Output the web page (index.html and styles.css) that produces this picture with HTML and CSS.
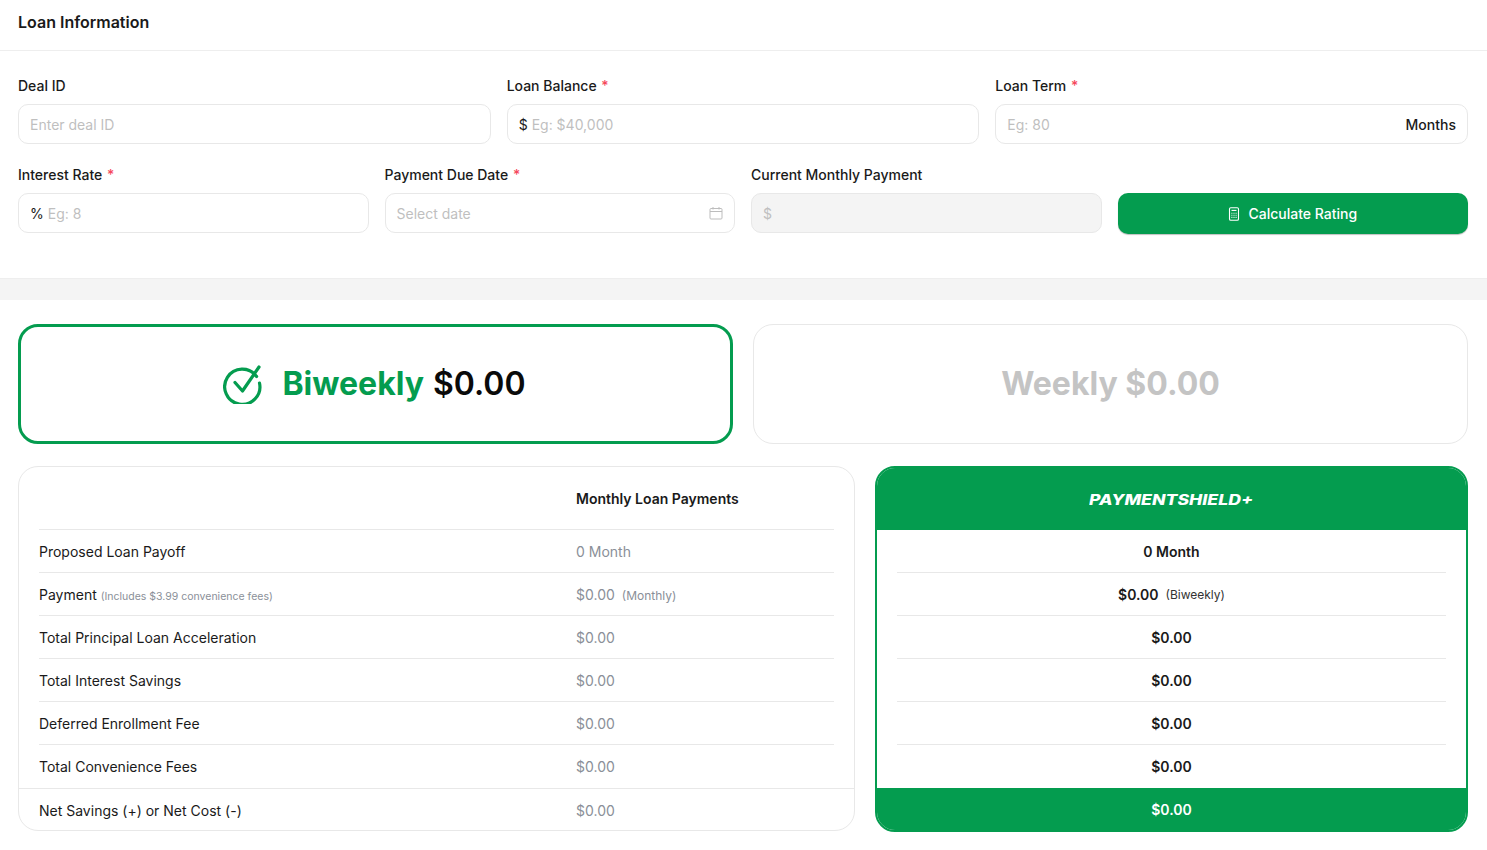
FILE: index.html
```html
<!DOCTYPE html>
<html lang="en">
<head>
<meta charset="utf-8">
<title>Loan Information</title>
<link rel="stylesheet" href="styles.css">
</head>
<body>
<section class="loan">
  <header class="loan-head">Loan Information</header>
  <div class="form">
    <div class="row row-3">
      <div class="field">
        <label class="label">Deal ID</label>
        <div class="input"><span class="ph">Enter deal ID</span></div>
      </div>
      <div class="field">
        <label class="label">Loan Balance <span class="req">*</span></label>
        <div class="input"><span class="prefix">$</span><span class="ph">Eg: $40,000</span></div>
      </div>
      <div class="field">
        <label class="label">Loan Term <span class="req">*</span></label>
        <div class="input input-split"><span class="ph">Eg: 80</span><span class="suffix">Months</span></div>
      </div>
    </div>
    <div class="row row-4">
      <div class="field">
        <label class="label">Interest Rate <span class="req">*</span></label>
        <div class="input"><span class="prefix">%</span><span class="ph">Eg: 8</span></div>
      </div>
      <div class="field">
        <label class="label">Payment Due Date <span class="req">*</span></label>
        <div class="input input-split"><span class="ph">Select date</span>
          <svg class="cal" viewBox="0 0 14 14" fill="none" stroke="#bdbdbd" stroke-width="1"><rect x="1" y="2.5" width="12" height="10.5" rx="1"/><path d="M1 5.5h12M4 1v2.5M10 1v2.5"/></svg>
        </div>
      </div>
      <div class="field">
        <label class="label">Current Monthly Payment</label>
        <div class="input input-off"><span class="ph">$</span></div>
      </div>
      <div class="field field-btn">
        <button class="btn" type="button">
          <svg class="calc" viewBox="0 0 12 14" fill="none" stroke="#fff" stroke-width="1.1"><rect x="1.5" y="0.8" width="9" height="12.4" rx="1.3"/><path d="M3.5 3.4h5"/><path d="M3.4 6.3h1M5.5 6.3h1M7.6 6.3h1M3.4 8.3h1M5.5 8.3h1M7.6 8.3h1M3.4 10.4h1M5.5 10.4h1M7.6 10.4h1"/></svg>
          Calculate Rating
        </button>
      </div>
    </div>
  </div>
</section>
<div class="band"></div>
<main class="results">
  <div class="plans">
    <div class="plan plan-on">
      <svg class="check" viewBox="0 0 40 40" fill="none" stroke="#049c4f" stroke-width="3.2" stroke-linecap="round" stroke-linejoin="round"><path d="M33.6 12.5A17.6 17.6 0 1 0 36.5 19"/><path d="M12 18.5l7.5 8.5L36 3"/></svg>
      <span class="plan-name">Biweekly</span> <span class="plan-amt">$0.00</span>
    </div>
    <div class="plan plan-off">Weekly $0.00</div>
  </div>
  <div class="tables">
    <div class="tbl">
      <div class="tbl-head"><span></span><span class="tbl-title">Monthly Loan Payments</span></div>
      <div class="tbl-body">
        <div class="tr"><span>Proposed Loan Payoff</span><span class="val">0 Month</span></div>
        <div class="tr"><span>Payment <small class="note">(Includes $3.99 convenience fees)</small></span><span class="val">$0.00 <small class="per">(Monthly)</small></span></div>
        <div class="tr"><span>Total Principal Loan Acceleration</span><span class="val">$0.00</span></div>
        <div class="tr"><span>Total Interest Savings</span><span class="val">$0.00</span></div>
        <div class="tr"><span>Deferred Enrollment Fee</span><span class="val">$0.00</span></div>
        <div class="tr"><span>Total Convenience Fees</span><span class="val">$0.00</span></div>
      </div>
      <div class="tr tr-foot"><span>Net Savings (+) or Net Cost (-)</span><span class="val">$0.00</span></div>
    </div>
    <div class="shield">
      <div class="shield-head"><span class="logo">PAYMENTSHIELD+</span></div>
      <div class="shield-body">
        <div class="sr">0 Month</div>
        <div class="sr">$0.00 <small class="per-dark">(Biweekly)</small></div>
        <div class="sr">$0.00</div>
        <div class="sr">$0.00</div>
        <div class="sr">$0.00</div>
        <div class="sr">$0.00</div>
      </div>
      <div class="shield-foot">$0.00</div>
    </div>
  </div>
</main>
</body>
</html>
```
FILE: styles.css
```css
* { box-sizing: border-box; }
html, body { margin: 0; padding: 0; }
body {
  width: 1487px;
  height: 850px;
  overflow: hidden;
  background: #fff;
  color: #1a1a1a;
  font-family: Inter, "Liberation Sans", sans-serif;
  font-size: 14px;
}
.loan-head {
  height: 51px;
  padding: 13px 18px 0;
  border-bottom: 1px solid #eeeeee;
  font-size: 16px;
  font-weight: 600;
  line-height: 19px;
}
.form {
  height: 227px;
  padding: 25px 19px 0 18px;
  display: flex;
  flex-direction: column;
  gap: 21px;
}
.row { display: grid; gap: 16px; }
.row-3 { grid-template-columns: repeat(3, 1fr); }
.row-4 { grid-template-columns: repeat(4, 1fr); }
.field { display: flex; flex-direction: column; gap: 9px; min-width: 0; }
.field-btn { justify-content: flex-end; }
.label {
  font-size: 14px;
  font-weight: 500;
  line-height: 19px;
  color: #1a1a1a;
}
.req { color: #f5475b; margin-left: 1px; }
.input {
  height: 40px;
  padding: 0 11px;
  display: flex;
  align-items: center;
  gap: 4px;
  border: 1px solid #e8e8e8;
  border-radius: 10px;
  background: #fff;
}
.input-split { justify-content: space-between; }
.input-off { background: #f4f4f4; }
.ph { color: #bfbfbf; }
.prefix { color: #1a1a1a; }
.suffix { font-weight: 500; color: #1a1a1a; }
.cal { width: 14px; height: 14px; }
.btn {
  height: 41px;
  margin-bottom: -1px;
  display: flex;
  align-items: center;
  justify-content: center;
  gap: 8px;
  border: 0;
  border-radius: 10px;
  background: #049c4f;
  box-shadow: 0 1px 1px rgba(0, 0, 0, .25);
  color: #fff;
  font: 500 14px Inter, sans-serif;
}
.calc { width: 12px; height: 14px; }
.band {
  height: 22px;
  background: #f4f4f4;
  border-top: 1px solid #eeeeee;
}
.results { padding: 24px 19px 0 18px; }
.plans {
  display: grid;
  grid-template-columns: 1fr 1fr;
  gap: 20px;
}
.plan {
  height: 120px;
  display: flex;
  align-items: center;
  justify-content: center;
  border-radius: 20px;
  font-size: 32px;
  font-weight: 700;
  line-height: 38px;
}
.plan-on { border: 3px solid #049c4f; gap: 9px; padding-right: 2px; }
.plan-off { border: 1px solid #e8e8e8; color: #c4c4c4; }
.check { width: 40px; height: 40px; margin-right: 10px; }
.plan-name { color: #049c4f; }
.plan-amt { color: #0a0a0a; font-weight: 600; }
.tables {
  margin-top: 22px;
  display: grid;
  grid-template-columns: 837px 593px;
  gap: 20px;
  align-items: start;
}
.tbl {
  height: 365px;
  border: 1px solid #e8e8e8;
  border-radius: 20px;
  overflow: hidden;
}
.tbl-head, .tr {
  display: grid;
  grid-template-columns: 537px 1fr;
  align-items: center;
}
.tbl-head {
  height: 63px;
  margin: 0 20px;
  border-bottom: 1px solid #e8e8e8;
}
.tbl-title { font-weight: 600; }
.tbl-body { padding: 0 20px; }
.tr { height: 43px; border-bottom: 1px solid #e8e8e8; }
.tbl-body .tr:last-child { border-bottom: 0; }
.tr-foot { height: 43px; padding: 0 20px; border-top: 1px solid #e8e8e8; border-bottom: 0; }
.val { color: #8a8f98; }
.note { font-size: 10.5px; color: #8a8f98; }
.per { font-size: 12px; margin-left: 3px; }
.shield {
  height: 366px;
  border: 2px solid #049c4f;
  border-radius: 20px;
  overflow: hidden;
  display: flex;
  flex-direction: column;
}
.shield-head {
  height: 62px;
  flex: none;
  display: flex;
  align-items: center;
  justify-content: center;
  background: #049c4f;
}
.logo {
  display: inline-block;
  color: #fff;
  font-size: 14px;
  font-weight: 800;
  font-style: italic;
  transform: scaleX(1.26);
}
.shield-body { flex: 1; padding: 0 20px; }
.sr {
  height: 43px;
  display: flex;
  align-items: center;
  justify-content: center;
  gap: 7px;
  border-bottom: 1px solid #e8e8e8;
  font-weight: 600;
}
.sr:last-child { border-bottom: 0; }
.per-dark { font-size: 12px; font-weight: 400; color: #333; }
.shield-foot {
  height: 42px;
  flex: none;
  display: flex;
  align-items: center;
  justify-content: center;
  background: #049c4f;
  color: #fff;
  font-weight: 600;
}
```
